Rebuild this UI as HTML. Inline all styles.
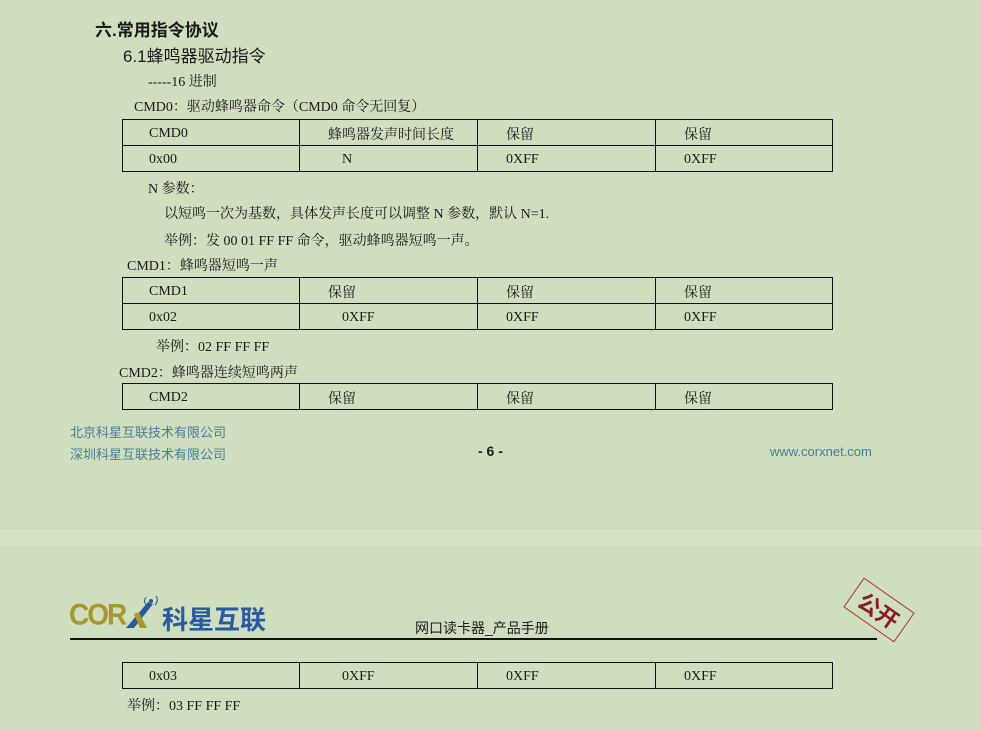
<!DOCTYPE html>
<html><head><meta charset="utf-8"><style>
body{margin:0;width:981px;height:730px;background:#cedebf;position:relative;overflow:hidden;font-family:"Liberation Serif","Noto Serif CJK SC",serif;color:#1a1a1a}
.t{position:absolute;white-space:nowrap;font-size:14px}
.band{position:absolute;left:0;top:530px;width:981px;height:16px;background:#d5e3c7}
table{position:absolute;left:122px;border-collapse:collapse;width:710px;table-layout:fixed}
td{border:1px solid #111;height:26px;padding:0;font-size:14px;vertical-align:middle;box-sizing:border-box;white-space:nowrap;padding-top:2px}
.s{font-family:"Liberation Sans","Noto Sans CJK SC",sans-serif}
</style></head><body>
<div class="band"></div>
<div class="t s" style="left:95px;top:16px;font-size:17px;font-weight:bold">六.常用指令协议</div>
<div class="t s" style="left:123px;top:42px;font-size:17px">6.1蜂鸣器驱动指令</div>
<div class="t" style="left:148px;top:71px">-----16 进制</div>
<div class="t" style="left:134px;top:96px">CMD0：驱动蜂鸣器命令（CMD0 命令无回复）</div>
<table style="top:119px"><colgroup><col style="width:177px"><col style="width:178px"><col style="width:178px"><col style="width:177px"></colgroup>
<tr><td style="padding-left:26px">CMD0</td><td style="padding-left:28px">蜂鸣器发声时间长度</td><td style="padding-left:28px">保留</td><td style="padding-left:28px">保留</td></tr>
<tr><td style="padding-left:26px">0x00</td><td style="padding-left:42px">N</td><td style="padding-left:28px">0XFF</td><td style="padding-left:28px">0XFF</td></tr>
</table>
<div class="t" style="left:148px;top:178px">N 参数：</div>
<div class="t" style="left:164px;top:203px">以短鸣一次为基数，具体发声长度可以调整 N 参数，默认 N=1.</div>
<div class="t" style="left:164px;top:230px">举例：发 00 01 FF FF 命令，驱动蜂鸣器短鸣一声。</div>
<div class="t" style="left:127px;top:255px">CMD1：蜂鸣器短鸣一声</div>
<table style="top:277px"><colgroup><col style="width:177px"><col style="width:178px"><col style="width:178px"><col style="width:177px"></colgroup>
<tr><td style="padding-left:26px">CMD1</td><td style="padding-left:28px">保留</td><td style="padding-left:28px">保留</td><td style="padding-left:28px">保留</td></tr>
<tr><td style="padding-left:26px">0x02</td><td style="padding-left:42px">0XFF</td><td style="padding-left:28px">0XFF</td><td style="padding-left:28px">0XFF</td></tr>
</table>
<div class="t" style="left:156px;top:336px">举例：02 FF FF FF</div>
<div class="t" style="left:119px;top:362px">CMD2：蜂鸣器连续短鸣两声</div>
<table style="top:383px"><colgroup><col style="width:177px"><col style="width:178px"><col style="width:178px"><col style="width:177px"></colgroup>
<tr><td style="padding-left:26px">CMD2</td><td style="padding-left:28px">保留</td><td style="padding-left:28px">保留</td><td style="padding-left:28px">保留</td></tr>
</table>
<div class="t s" style="left:70px;top:422px;font-size:13px;color:#4a7e96">北京科星互联技术有限公司</div>
<div class="t s" style="left:70px;top:444px;font-size:13px;color:#4a7e96">深圳科星互联技术有限公司</div>
<div class="t s" style="left:478px;top:443px;font-size:14px;font-weight:bold">- 6 -</div>
<div class="t s" style="left:770px;top:444px;font-size:13px;color:#4a7e96">www.corxnet.com</div>
<div class="t s" style="left:69px;top:599px;font-size:28px;font-weight:bold;color:#a8962e;letter-spacing:-2px;transform:scaleY(1.05)">COR</div>
<svg style="position:absolute;left:122px;top:594px" width="40" height="38" viewBox="0 0 40 38"><path d="M4 34 L26 8 L31 10 L12 34 Z" fill="#2a5a9a"/><path d="M18 34 L12 20 L17 18 L25 34Z" fill="#a8962e"/><circle cx="29" cy="7" r="2" fill="#2a5a9a"/><path d="M24 3 Q21 7 24 11 M34 2 Q37 7 33 11" stroke="#2a5a9a" fill="none" stroke-width="1"/></svg>
<div class="t s" style="left:162px;top:600px;font-size:26px;font-weight:bold;color:#2a5aa0">科星互联</div>
<div class="t s" style="left:415px;top:618px;font-size:14px">网口读卡器_产品手册</div>
<div style="position:absolute;left:70px;top:638px;width:807px;height:2px;background:#111"></div>
<div style="position:absolute;left:848px;top:592px;width:60px;height:34px;border:1px solid #a33;transform:rotate(35deg);color:#8a1c28;font-size:22px;font-weight:bold;text-align:center;line-height:34px;font-family:'Noto Sans CJK SC',sans-serif">公开</div>
<table style="top:662px"><colgroup><col style="width:177px"><col style="width:178px"><col style="width:178px"><col style="width:177px"></colgroup>
<tr><td style="padding-left:26px">0x03</td><td style="padding-left:42px">0XFF</td><td style="padding-left:28px">0XFF</td><td style="padding-left:28px">0XFF</td></tr>
</table>
<div class="t" style="left:127px;top:695px">举例：03 FF FF FF</div>
</body></html>
